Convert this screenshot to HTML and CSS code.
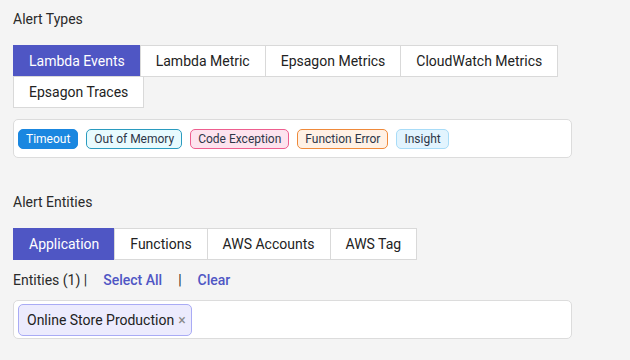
FILE: index.html
```html
<!DOCTYPE html>
<html>
<head>
<meta charset="utf-8">
<link rel="stylesheet" href="styles.css">
</head>
<body>
<div class="page">
  <section class="section">
    <div class="title">Alert Types</div>
    <div class="tabs tabs-types">
      <div class="tab active">Lambda Events</div>
      <div class="tab">Lambda Metric</div>
      <div class="tab">Epsagon Metrics</div>
      <div class="tab">CloudWatch Metrics</div>
      <div class="tab">Epsagon Traces</div>
    </div>
    <div class="tagbox">
      <span class="tag tag-timeout">Timeout</span>
      <span class="tag tag-oom">Out of Memory</span>
      <span class="tag tag-code">Code Exception</span>
      <span class="tag tag-func">Function Error</span>
      <span class="tag tag-insight">Insight</span>
    </div>
  </section>
  <section class="section section-entities">
    <div class="title">Alert Entities</div>
    <div class="tabs">
      <div class="tab active">Application</div>
      <div class="tab">Functions</div>
      <div class="tab">AWS Accounts</div>
      <div class="tab">AWS Tag</div>
    </div>
    <div class="entities-row">
      <span class="count">Entities (1) |</span>
      <span class="link">Select All</span>
      <span class="sep">|</span>
      <span class="link">Clear</span>
    </div>
    <div class="inputbox">
      <span class="chip">Online Store Production<span class="chip-x">×</span></span>
    </div>
  </section>
</div>
</body>
</html>
```
FILE: styles.css
```css
html, body {
  margin: 0;
  padding: 0;
  background: #f4f4f4;
}
body {
  font-family: Roboto, "Noto Sans", sans-serif;
  color: #222;
  width: 630px;
  height: 360px;
  overflow: hidden;
}
.page {
  padding: 11px 13px 0 13px;
  width: 559px;
}
.title {
  font-size: 14px;
  line-height: 16px;
  color: #2a2a2a;
}
.tabs {
  display: flex;
  flex-wrap: wrap;
  margin-top: 18px;
  width: 100%;
}
.tab {
  box-sizing: border-box;
  height: 32px;
  line-height: 30px;
  padding: 0 15px;
  font-size: 14px;
  color: #222;
  background: #fff;
  border: 1px solid #d9d9d9;
  margin-right: -1px;
  margin-bottom: -1px;
}
.tab.active {
  background: #4f56c4;
  border-color: #4f56c4;
  color: #fff;
}
.tagbox {
  box-sizing: border-box;
  margin-top: 12px;
  height: 39px;
  background: #fff;
  border: 1px solid #dcdcdc;
  border-radius: 5px;
  display: flex;
  align-items: center;
  gap: 8px;
  padding: 0 4px;
}
.tag {
  box-sizing: border-box;
  height: 20px;
  line-height: 18px;
  padding: 0 7px;
  font-size: 12px;
  border-radius: 5px;
  border: 1px solid;
  color: #2d3648;
}
.tag-timeout { background: #1a87e0; border-color: #1a87e0; color: #fff; }
.tag-oom { background: #e8fbfe; border-color: #2a9bbf; }
.tag-code { background: #fde3ee; border-color: #ee5e8f; }
.tag-func { background: #fff1e5; border-color: #ef8a3b; }
.tag-insight { background: #e2f4fe; border-color: #a8dcf8; }
.section-entities {
  margin-top: 36px;
}
.entities-row {
  display: flex;
  align-items: center;
  height: 16px;
  margin-top: 13px;
  font-size: 14px;
  line-height: 16px;
  color: #2a2a2a;
}
.link {
  color: #4f56c4;
  font-weight: 500;
}
.count { margin-right: 16px; }
.sep { margin: 0 16px; }
.inputbox {
  box-sizing: border-box;
  margin-top: 12px;
  height: 39px;
  background: #fff;
  border: 1px solid #dcdcdc;
  border-radius: 5px;
  display: flex;
  align-items: center;
  padding: 0 4px;
}
.chip {
  box-sizing: border-box;
  height: 32px;
  line-height: 31px;
  padding: 0 5px 0 8px;
  font-size: 14px;
  color: #222;
  background: #ecebfd;
  border: 1px solid #a9abf5;
  border-radius: 5px;
}
.chip-x {
  color: #888;
  margin-left: 4px;
  font-size: 14px;
}
```
